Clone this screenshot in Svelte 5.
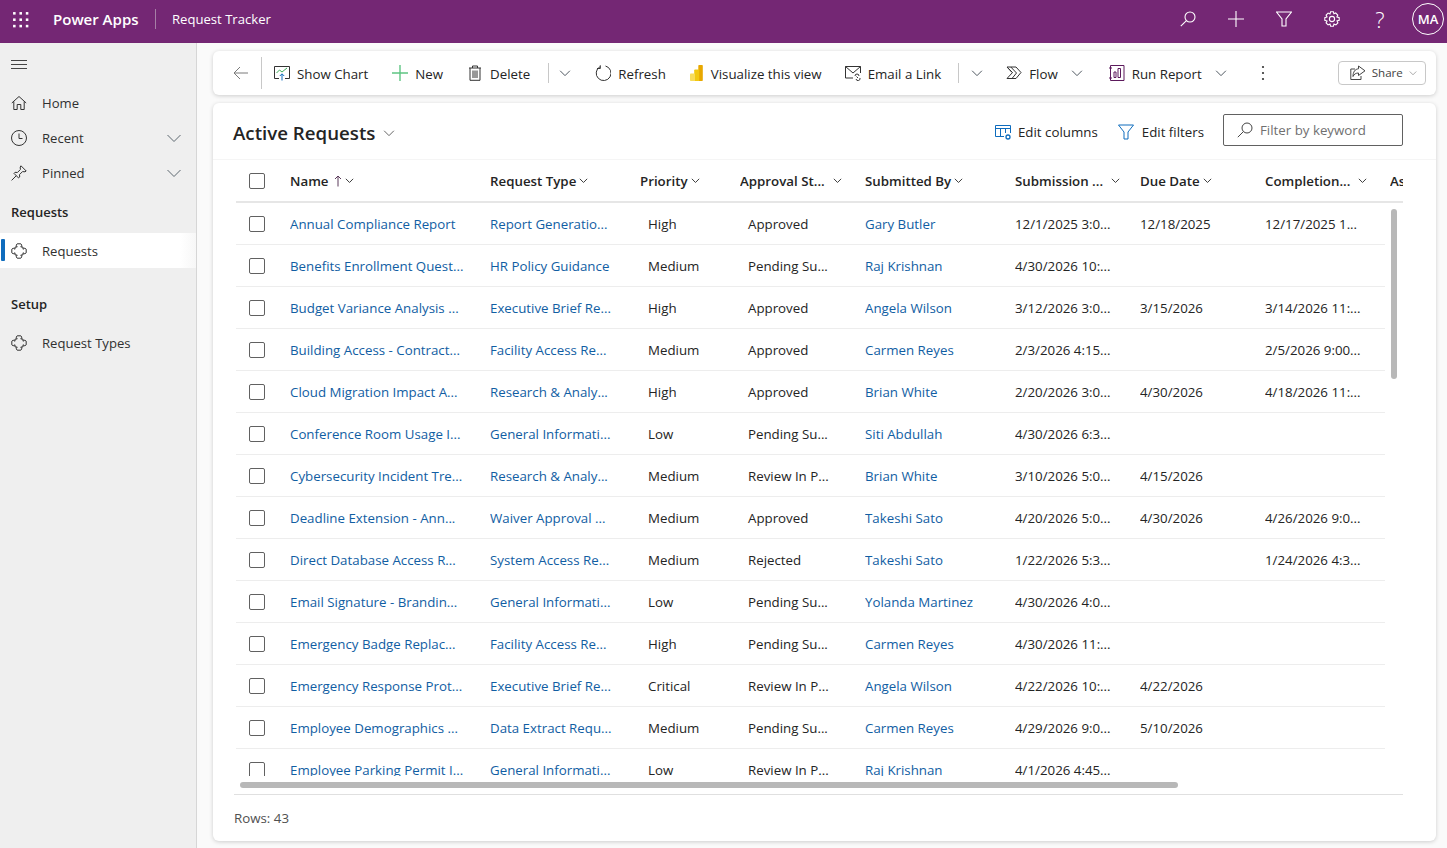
<script>
  const rows = [
    ['Annual Compliance Report','Report Generatio...','High','Approved','Gary Butler','12/1/2025 3:0...','12/18/2025','12/17/2025 1...'],
    ['Benefits Enrollment Quest...','HR Policy Guidance','Medium','Pending Su...','Raj Krishnan','4/30/2026 10:...','',''],
    ['Budget Variance Analysis ...','Executive Brief Re...','High','Approved','Angela Wilson','3/12/2026 3:0...','3/15/2026','3/14/2026 11:...'],
    ['Building Access - Contract...','Facility Access Re...','Medium','Approved','Carmen Reyes','2/3/2026 4:15...','','2/5/2026 9:00...'],
    ['Cloud Migration Impact A...','Research & Analy...','High','Approved','Brian White','2/20/2026 3:0...','4/30/2026','4/18/2026 11:...'],
    ['Conference Room Usage I...','General Informati...','Low','Pending Su...','Siti Abdullah','4/30/2026 6:3...','',''],
    ['Cybersecurity Incident Tre...','Research & Analy...','Medium','Review In P...','Brian White','3/10/2026 5:0...','4/15/2026',''],
    ['Deadline Extension - Ann...','Waiver Approval ...','Medium','Approved','Takeshi Sato','4/20/2026 5:0...','4/30/2026','4/26/2026 9:0...'],
    ['Direct Database Access R...','System Access Re...','Medium','Rejected','Takeshi Sato','1/22/2026 5:3...','','1/24/2026 4:3...'],
    ['Email Signature - Brandin...','General Informati...','Low','Pending Su...','Yolanda Martinez','4/30/2026 4:0...','',''],
    ['Emergency Badge Replac...','Facility Access Re...','High','Pending Su...','Carmen Reyes','4/30/2026 11:...','',''],
    ['Emergency Response Prot...','Executive Brief Re...','Critical','Review In P...','Angela Wilson','4/22/2026 10:...','4/22/2026',''],
    ['Employee Demographics ...','Data Extract Requ...','Medium','Pending Su...','Carmen Reyes','4/29/2026 9:0...','5/10/2026',''],
    ['Employee Parking Permit I...','General Informati...','Low','Review In P...','Raj Krishnan','4/1/2026 4:45...','','']
  ];
  const headers = ['Request Type','Priority','Approval St...','Submitted By','Submission ...','Due Date','Completion...'];
</script>

{#snippet chev(cls)}
  <svg class={cls} viewBox="0 0 16 16"><path d="M1.5 5 L8 11.5 L14.5 5" /></svg>
{/snippet}
{#snippet puzzle()}
  <svg class="ni" viewBox="0 0 16 16"><path d="M4 4 H6.2 L5.2 2.2 L6.2 .8 H9.8 L10.8 2.2 L9.8 4 H12 V6.2 L13.8 5.2 L15.2 6.2 V9.8 L13.8 10.8 L12 9.8 V12 H9.8 L10.8 13.8 L9.8 15.2 H6.2 L5.2 13.8 L6.2 12 H4 V9.8 L2.2 10.8 L.8 9.8 V6.2 L2.2 5.2 L4 6.2 Z"/></svg>
{/snippet}

<div class="app">
  <header class="top">
    <svg class="waffle" viewBox="0 0 16 16"><g>
      {#each [1,7,13] as y}{#each [1,7,13] as x}<rect x={x} y={y} width="2.4" height="2.4" />{/each}{/each}
    </g></svg>
    <span class="brand">Power Apps</span>
    <span class="topdiv"></span>
    <span class="appname">Request Tracker</span>
    <div class="topicons">
      <svg viewBox="0 0 16 16"><circle cx="10" cy="6" r="5"/><path d="M6.4 9.6 L.8 15.2"/></svg>
      <svg viewBox="0 0 16 16"><path d="M8 0 V16 M0 8 H16"/></svg>
      <svg viewBox="0 0 16 16"><path d="M.5 1 H15.5 L10 8 V15 H6 V8 Z"/></svg>
      <svg viewBox="0 0 16 16"><path d="M6.6 .8 H9.4 L9.9 2.8 L11.7 2 L13.8 4 L12.9 5.9 L15.2 6.6 V9.4 L13 9.9 L13.9 11.8 L11.9 13.9 L10 13 L9.4 15.2 H6.6 L6 13 L4.1 13.9 L2.1 11.9 L3 10 L.8 9.4 V6.6 L3 6 L2.1 4.1 L4.1 2.1 L6 3 Z"/><circle cx="8" cy="8" r="2.6"/></svg>
      <span class="q">?</span>
      <span class="avatar">MA</span>
    </div>
  </header>

  <div class="body">
    <nav class="side">
      <svg class="burger" viewBox="0 0 16 10"><path d="M0 .5 H16 M0 4.5 H16 M0 8.5 H16"/></svg>
      <a class="nav"><svg class="ni" viewBox="0 0 16 16"><path d="M.8 8 L8 1.5 L15.2 8 M2.8 6.5 V14.5 H6.2 V9.5 H9.8 V14.5 H13.2 V6.5"/></svg>Home</a>
      <a class="nav"><svg class="ni clock" viewBox="0 0 16 16"><circle cx="8" cy="8" r="7.5"/><path d="M8 3.5 V8.5 H11.5"/></svg>Recent{@render chev('navchev')}</a>
      <a class="nav"><svg class="ni" viewBox="0 0 16 16"><path d="M10 .8 L15.2 6 L14 6.8 L11.5 6.6 L8.5 9.6 L8.7 12 L7.6 13 L3 8.4 L4 7.3 L6.4 7.5 L9.4 4.5 L9.2 2 Z M5.2 10.8 L.6 15.4"/></svg>Pinned{@render chev('navchev')}</a>
      <h3 class="g1">Requests</h3>
      <a class="nav sel"><span class="bar"></span>{@render puzzle()}Requests</a>
      <h3 class="g2">Setup</h3>
      <a class="nav rt">{@render puzzle()}Request Types</a>
    </nav>

    <main class="main">
      <div class="cmd">
        <svg class="back" viewBox="0 0 16 16"><path d="M7 2 L1 8 L7 14 M1 8 H15"/></svg>
        <span class="vd tall"></span>
        <button class="b b1"><svg class="cb" viewBox="0 0 16 16"><path class="k" d="M5 13.5 H.5 V1.5 H15.5 V13.5 H11"/><path class="gr" d="M2.5 8 L5.5 5 L8 7 L13 3"/><path class="bl" d="M8 15.5 V9 M5.8 11 L8 8.8 L10.2 11"/></svg>Show Chart</button>
        <button class="b b2"><svg class="cb plus" viewBox="0 0 16 16"><path d="M8 0 V16 M0 8 H16"/></svg>New</button>
        <button class="b b3"><svg class="cb" viewBox="0 0 16 16"><path class="k" d="M2 3 H14 M5.5 3 V1 H10.5 V3 M3 3 V15.3 H13 V3 M6 5.5 V13 M8 5.5 V13 M10 5.5 V13"/></svg>Delete</button>
        <span class="vd d2"></span>
        {@render chev('cc c1')}
        <button class="b b4"><svg class="cb" viewBox="0 0 16 16"><path class="k" d="M10.5 1 A7.4 7.4 0 1 1 5 1.7 M5.3 .3 V3.5 H2"/></svg>Refresh</button>
        <button class="b b5"><svg class="cb pbi" viewBox="0 0 13 16"><rect x="8.3" y="0" width="4.5" height="16" rx=".8" fill="#e8a800"/><rect x="4.2" y="4.5" width="5" height="11.5" rx=".8" fill="#f2c811"/><rect x="0" y="8.5" width="5" height="7.5" rx=".8" fill="#f8dc5a"/></svg>Visualize this view</button>
        <button class="b b6"><svg class="cb" viewBox="0 0 16 16"><path class="k" d="M8 13 H.5 V1.5 H15.5 V8 M.5 1.5 L8 8 L15.5 1.5"/><path class="k" d="M10 11 A2 2 0 0 1 14 11 M11 14 A2 2 0 0 0 15 13 M11.5 11.5 L13 13"/></svg>Email a Link</button>
        <span class="vd d3"></span>
        {@render chev('cc c2')}
        <button class="b b7"><svg class="cb" viewBox="0 0 16 16"><path class="k" d="M1 2 H10 L15 7.5 L10 13.5 H1 L6.5 7.5 Z M1 2 L6 7.5 M4.8 2 L10.5 8 L6 13.5"/></svg>Flow</button>
        {@render chev('cc c3')}
        <button class="b b8"><svg class="cb" viewBox="0 0 16 16"><path class="pu" d="M1.5 .5 H15 V15.5 H1.5 Z M0 3 H3 M0 13 H3"/><path class="pu" d="M5 7 H7 V12.5 H5 Z M9 3.5 H11.5 V12.5 H9 Z"/></svg>Run Report</button>
        {@render chev('cc c4')}
        <svg class="kebab" viewBox="0 0 4 16"><circle cx="2" cy="2" r="1.1"/><circle cx="2" cy="8" r="1.1"/><circle cx="2" cy="14" r="1.1"/></svg>
        <button class="share"><svg class="sh" viewBox="0 0 16 16"><path d="M11 11 V14.5 H.8 V4 H5 M8.5 1 L15 5.8 L8.5 10.5 V8 C6 8 4 9 3 11.5 C3 7 5 4 8.5 3.8 Z"/></svg>Share{@render chev('shc')}</button>
      </div>

      <section class="card">
        <div class="vh">
          <h1>Active Requests</h1>
          {@render chev('tc')}
          <div class="vr">
            <span class="act a1"><svg class="vi" viewBox="0 0 16 16"><path class="bls" d="M.5 12.5 V1.5 H15.5 V9 M.5 12.5 H9 M.5 4.5 H15.5 M5.5 4.5 V12.5 M10.5 4.5 V9"/><circle class="bls gear" cx="13" cy="13" r="2"/></svg>Edit columns</span>
            <span class="act a2"><svg class="vi" viewBox="0 0 16 16"><path class="bls" d="M.5 1 H15.5 L10 8 V15 H6 V8 Z"/></svg>Edit filters</span>
            <div class="search"><svg viewBox="0 0 16 16"><circle cx="10" cy="6" r="5"/><path d="M6.4 9.6 L.8 15.2"/></svg>Filter by keyword</div>
          </div>
        </div>

        <div class="grid">
          <div class="hrow">
            <div class="ck"><span class="box"></span></div>
            <div class="hc"><b>Name</b><svg class="up" viewBox="0 0 8 12"><path d="M4 11.5 V1 M1 4 L4 1 L7 4"/></svg>{@render chev('hchev')}</div>
            {#each headers as h, i}
              <div class="hc"><b>{h}</b>{@render chev(i === 2 || i === 4 || i === 6 ? 'hchev wide' : 'hchev')}</div>
            {/each}
            <div class="hc clip"><b>As</b></div>
          </div>
          <div class="rows">
            {#each rows as r}
              <div class="row">
                <div class="ck"><span class="box"></span></div>
                <a class="c">{r[0]}</a>
                <a class="c">{r[1]}</a>
                <span class="c in">{r[2]}</span>
                <span class="c in">{r[3]}</span>
                <a class="c">{r[4]}</a>
                <span class="c">{r[5]}</span>
                <span class="c">{r[6]}</span>
                <span class="c">{r[7]}</span>
              </div>
            {/each}
          </div>
          <span class="vscroll"></span>
          <span class="hscroll"></span>
        </div>

        <div class="foot">Rows: 43</div>
      </section>
    </main>
  </div>
</div>

<style>
  :global(body) { margin: 0; background: #fafafa; }
  .app { width: 1447px; height: 848px; overflow: hidden; font: 13.3px/18px "Open Sans", "Noto Sans", sans-serif; color: #242424; display: flex; flex-direction: column; }
  svg { fill: none; stroke: currentColor; stroke-width: 1; flex: none; }
  button { font: inherit; color: inherit; background: none; border: 0; padding: 0; display: flex; align-items: center; white-space: nowrap; }
  h1, h3 { margin: 0; }

  .top { height: 43px; flex: none; background: #742774; color: #fff; display: flex; align-items: center; padding-bottom: 5px; box-sizing: border-box; }
  .waffle { width: 17px; height: 17px; margin-left: 12px; }
  .waffle rect { fill: #fff; stroke: none; }
  .brand { font-weight: 600; font-size: 15px; margin-left: 24px; width: 88px; white-space: nowrap; }
  .topdiv { width: 1px; height: 20px; background: #a67fa6; margin-left: 14px; }
  .appname { margin-left: 16px; white-space: nowrap; font-size: 13.1px; }
  .topicons { margin-left: auto; display: flex; align-items: center; padding-right: 3px; }
  .topicons svg { width: 16px; height: 16px; margin-right: 32px; stroke-width: 1.1; }
  .q { font-size: 22px; font-weight: 300; width: 16px; text-align: center; margin-right: 24px; }
  .avatar { width: 30px; height: 30px; border: 1px solid #fff; border-radius: 50%; display: flex; align-items: center; justify-content: center; font-weight: 600; font-size: 13px; }

  .body { flex: 1; display: flex; min-height: 0; }
  .side { width: 196px; flex: none; background: #efefef; border-right: 1px solid #d6d6d6; box-shadow: 1px 0 2px rgba(0,0,0,.05); display: flex; flex-direction: column; padding-top: 17px; box-sizing: content-box; }
  .burger { width: 16px; height: 10px; margin: 0 0 15px 11px; color: #444; }
  .nav { height: 35px; display: flex; align-items: center; padding-left: 11px; position: relative; color: #303030; font-size: 13.1px; }
  .ni { width: 16px; height: 16px; margin-right: 15px; color: #333; }
  .nav :global(.navchev) { width: 16px; height: 16px; margin-left: auto; margin-right: 14px; stroke: #5d6870; }
  .g1, .g2 { font-size: 13px; font-weight: 600; padding-left: 11px; line-height: 18px; color: #242424; }
  .g1 { margin: 13px 0 12px; }
  .g2 { margin: 27px 0 12px; }
  .sel { background: linear-gradient(90deg, #fff 92%, #f7f7f7); }
  .bar { position: absolute; left: 1px; top: 6px; width: 4px; height: 22px; background: #0f6cbd; border-radius: 1px; }

  .main { flex: 1; min-width: 0; padding: 8px 11px 7px 16px; display: flex; flex-direction: column; gap: 8px; background: #fafafa; }
  .cmd { height: 44px; flex: none; background: #fff; border-radius: 6px; box-shadow: 0 1px 4px rgba(0,0,0,.18); display: flex; align-items: center; }
  .b { padding-top: 2px; }
  .cb { width: 16px; height: 16px; margin-right: 7px; margin-top: -2px; }
  .k { stroke: #333; } .gr { stroke: #3cab5a; } .bl { stroke: #0f6cbd; } .pu { stroke: #5c1a5c; }
  .back { width: 16px; height: 16px; margin: 0 0 0 20px; color: #7a7a7a; }
  .plus { color: #5fc583; stroke-width: 1.4; }
  .pbi { width: 13px; margin-right: 8px; }
  .pbi rect { stroke: none; }
  .vd { width: 1px; background: #c8c8c8; height: 20px; flex: none; }
  .vd.tall { height: 32px; margin-left: 12px; }
  .b1 { margin-left: 12px; }
  .b2 { margin-left: 24px; }
  .b3 { margin-left: 24px; }
  .d2 { margin-left: 18px; }
  .cmd :global(.cc) { width: 12px; height: 12px; color: #3c4650; flex: none; stroke-width: 1.2; }
  .cmd :global(.c1) { margin-left: 10px; }
  .b4 { margin-left: 24px; }
  .b5 { margin-left: 24px; }
  .b6 { margin-left: 23px; }
  .d3 { margin-left: 17px; }
  .cmd :global(.c2) { margin-left: 12px; }
  .b7 { margin-left: 23px; }
  .cmd :global(.c3) { margin-left: 13px; }
  .b8 { margin-left: 26px; }
  .cmd :global(.c4) { margin-left: 13px; }
  .kebab { width: 4px; height: 16px; margin-left: 34px; }
  .kebab circle { fill: #333; stroke: none; }
  .share { margin-left: 73px; width: 88px; height: 24px; box-sizing: border-box; border: 1px solid #c8c8c8; border-radius: 4px; padding-left: 11px; font-size: 11.6px; color: #444; }
  .sh { width: 16px; height: 16px; margin-right: 6px; }
  .share :global(.shc) { width: 8px; height: 8px; margin-left: 6px; color: #555; }

  .card { flex: 1; min-height: 0; background: #fff; border-radius: 6px; box-shadow: 0 1px 4px rgba(0,0,0,.18); display: flex; flex-direction: column; }
  .vh { height: 56px; flex: none; border-bottom: 1px solid #f5f5f5; display: flex; align-items: center; padding: 0 33px 0 20px; }
  h1 { font-size: 18.7px; font-weight: 600; white-space: nowrap; line-height: 26px; padding-top: 4px; }
  .vh :global(.tc) { width: 12px; height: 12px; margin-left: 8px; margin-top: 4px; color: #555; stroke-width: 1.2; }
  .vr { margin-left: auto; display: flex; align-items: center; padding-bottom: 3px; }
  .act { display: flex; align-items: center; white-space: nowrap; padding-top: 4px; }
  .vi { width: 16px; height: 16px; margin-right: 8px; }
  .a1 .vi { margin-right: 7px; }
  .bls { stroke: #0f6cbd; }
  .gear { stroke-width: 1.3; }
  .a2 { margin-left: 20px; }
  .search { margin-left: 19px; width: 180px; height: 32px; box-sizing: border-box; border: 1px solid #616161; border-radius: 2px; display: flex; align-items: center; padding-left: 13px; color: #707070; }
  .search svg { width: 16px; height: 16px; margin-right: 7px; color: #444; }

  .grid { width: 1167px; height: 630px; margin-left: 23px; position: relative; flex: none; overflow: hidden; }
  .hrow { height: 43px; border-bottom: 2px solid #e6e6e6; display: grid; grid-template-columns: 54px 200px 150px 100px 125px 150px 125px 125px 125px 14px; align-items: center; box-sizing: border-box; }
  .hc { display: flex; align-items: center; white-space: nowrap; min-width: 0; overflow: hidden; }
  .hc b { font-weight: 600; }
  .up { width: 8px; height: 12px; margin-left: 6px; color: #5a3a5a; }
  .hc :global(.hchev) { width: 9px; height: 9px; margin-left: 3px; color: #333; stroke-width: 1.7; }
  .hc :global(.wide) { margin-left: 8px; }
  .ck { padding-left: 13px; display: flex; align-items: center; }
  .box { display: block; width: 16px; height: 16px; border: 1px solid #616161; border-radius: 2px; box-sizing: border-box; }
  .rows { width: 1149px; height: 573px; overflow: hidden; }
  .row { height: 42px; border-bottom: 1px solid #ededed; box-sizing: border-box; display: grid; grid-template-columns: 54px 200px 150px 100px 125px 150px 125px 125px 125px; align-items: center; }
  .c { white-space: nowrap; overflow: hidden; min-width: 0; }
  a.c { color: #115ea3; }
  .in { padding-left: 8px; }
  .vscroll { position: absolute; left: 1155px; top: 49px; width: 6px; height: 170px; border-radius: 3px; background: #b8b8b8; }
  .hscroll { position: absolute; left: 4px; top: 622px; width: 938px; height: 6px; border-radius: 3px; background: #b8b8b8; }

  .foot { margin: 4px 33px 0 21px; border-top: 1px solid #e0e0e0; padding-top: 14px; color: #505050; }
</style>
